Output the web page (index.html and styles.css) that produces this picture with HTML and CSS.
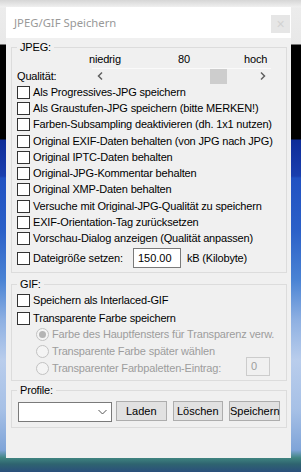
FILE: index.html
```html
<!doctype html>
<html lang="de">
  <head>
    <meta charset="UTF-8" />
    <meta name="viewport" content="width=device-width, initial-scale=1.0" />
    <title>JPEG/GIF Speichern</title>
    <link rel="stylesheet" href="styles.css">
  </head>
  <body>
    <div class="window">
      <div class="titlebar">
        <span class="title">JPEG/GIF Speichern</span>
        <span class="close">&times;</span>
      </div>

      <fieldset class="group group-jpeg">
        <legend>JPEG:</legend>
        <div class="scale-labels">
          <span class="scale-low">niedrig</span>
          <span class="scale-mid">80</span>
          <span>hoch</span>
        </div>
        <div class="quality-row">
          <span>Qualität:</span>
          <div class="scrollbar">
            <span class="sb-btn">
              <svg width="17" height="16" viewBox="0 0 17 16"><polyline points="10,4.5 6.5,8 10,11.5" fill="none" stroke="#606060" stroke-width="1.5" /></svg>
            </span>
            <span class="sb-track"><span class="sb-thumb"></span></span>
            <span class="sb-btn">
              <svg width="17" height="16" viewBox="0 0 17 16"><polyline points="7,4.5 10.5,8 7,11.5" fill="none" stroke="#606060" stroke-width="1.5" /></svg>
            </span>
          </div>
        </div>
        <div class="check"><span class="box"></span>Als Progressives-JPG speichern</div>
        <div class="check"><span class="box"></span>Als Graustufen-JPG speichern (bitte MERKEN!)</div>
        <div class="check"><span class="box"></span>Farben-Subsampling deaktivieren (dh. 1x1 nutzen)</div>
        <div class="check"><span class="box"></span>Original EXIF-Daten behalten (von JPG nach JPG)</div>
        <div class="check"><span class="box"></span>Original IPTC-Daten behalten</div>
        <div class="check"><span class="box"></span>Original-JPG-Kommentar behalten</div>
        <div class="check"><span class="box"></span>Original XMP-Daten behalten</div>
        <div class="check"><span class="box"></span>Versuche mit Original-JPG-Qualität zu speichern</div>
        <div class="check"><span class="box"></span>EXIF-Orientation-Tag zurücksetzen</div>
        <div class="check"><span class="box"></span>Vorschau-Dialog anzeigen (Qualität anpassen)</div>
        <div class="check size-row">
          <span class="box"></span>
          <span>Dateigröße setzen:</span>
          <span class="textbox">150.00</span>
          <span>kB (Kilobyte)</span>
        </div>
      </fieldset>

      <fieldset class="group group-gif">
        <legend>GIF:</legend>
        <div class="check gif-row1"><span class="box"></span>Speichern als Interlaced-GIF</div>
        <div class="check gif-row2"><span class="box"></span>Transparente Farbe speichern</div>
        <div class="radio radio1"><span class="dot checked"></span>Farbe des Hauptfensters für Transparenz verw.</div>
        <div class="radio radio2"><span class="dot"></span>Transparente Farbe später wählen</div>
        <div class="radio radio3">
          <span class="dot"></span>
          <span>Transparenter Farbpaletten-Eintrag:</span>
          <span class="numbox">0</span>
        </div>
      </fieldset>

      <fieldset class="group group-profile">
        <legend>Profile:</legend>
        <div class="profile-row">
          <span class="combo">
            <svg width="9" height="6" viewBox="0 0 9 6"><polyline points="0.5,1 4.5,5 8.5,1" fill="none" stroke="#555" stroke-width="1" /></svg>
          </span>
          <span class="btn">Laden</span>
          <span class="btn">Löschen</span>
          <span class="btn">Speichern</span>
        </div>
      </fieldset>
    </div>
  </body>
</html>
```

FILE: styles.css
```css
* {
  margin: 0;
  padding: 0;
  box-sizing: border-box;
}

body {
  width: 301px;
  height: 472px;
  overflow: hidden;
  font-family: 'Liberation Sans', Arial, sans-serif;
  font-size: 11px;
  line-height: 13px;
  letter-spacing: -0.17px;
  color: #000;
  background: linear-gradient(to bottom,
    #d6d6d6 0px, #efefef 7px,
    #ececec 8px, #e8e8e8 44px,
    #000 45px, #000 139px,
    #0e2c98 140px, #1a3fae 176px,
    #2152c2 178px, #2b60c8 230px,
    #4a83d4 280px, #8eb0e2 320px,
    #b9cdec 360px, #a6c0e6 410px,
    #7fa4d8 450px, #3f8480 458px,
    #2f6470 464px, #2a4f7c 472px);
}

.window {
  width: 285px;
  height: 451px;
  margin: 7px 10px 0 6px;
  background: #f0f0f0;
  overflow: hidden;
}

.titlebar {
  height: 31px;
  background: #fff;
  display: flex;
  align-items: center;
  justify-content: space-between;
  padding-left: 8px;
}

.title {
  font-family: 'Noto Sans', 'Open Sans', sans-serif;
  font-size: 11.3px;
  letter-spacing: 0;
  color: #999;
}

.close {
  align-self: flex-start;
  width: 19px;
  height: 18px;
  margin-top: 8px;
  margin-right: 1px;
  background: #e6e6e6;
  color: #d2d2d2;
  font-size: 14px;
  line-height: 18px;
  text-align: center;
}

.group {
  border: 1px solid #dcdcdc;
  margin: 0 4px 0 5px;
  padding: 0 0 0 5px;
  min-width: 0;
}

.group legend {
  padding: 0 3px;
  line-height: 13px;
}

.group-jpeg {
  margin-top: 3px;
  padding-bottom: 2.6px;
}

.group-gif {
  margin-top: 5px;
  padding-bottom: 2.4px;
}

.group-profile {
  margin-top: 3px;
  padding-bottom: 5px;
}

.scale-labels {
  display: flex;
  height: 13px;
  margin-top: -1px;
}

.scale-low {
  margin-left: 72px;
  width: 89px;
}

.scale-mid {
  width: 66px;
}

.quality-row {
  display: grid;
  grid-template-columns: 75px 179px;
  align-items: center;
  height: 16px;
  margin-top: 2px;
}

.scrollbar {
  display: flex;
  height: 16px;
  border-top: 1px solid #fafafa;
}

.sb-btn {
  display: flex;
  width: 17px;
  margin-top: -1px;
}

.sb-track {
  flex: 1;
  display: flex;
}

.sb-thumb {
  width: 17px;
  height: 15px;
  margin-left: 101px;
  background: #cdcdcd;
}

.check {
  display: flex;
  align-items: center;
  height: 16.3px;
  white-space: nowrap;
}

.group-jpeg .check:first-of-type {
  margin-top: 2.35px;
}

.box {
  flex: none;
  width: 13px;
  height: 13px;
  border: 1px solid #333;
  background: #fff;
  margin-right: 3px;
}

.size-row {
  height: 21px;
  margin-top: 1px;
}

.textbox {
  width: 48px;
  height: 20px;
  margin: 0 6px 0 10px;
  padding: 3px 4px;
  background: #fff;
  border: 1px solid #7a7a7a;
  letter-spacing: 0;
}

.gif-row1 {
  height: 18.4px;
  margin-top: 1px;
}

.gif-row2 {
  height: 16.4px;
}

.radio {
  display: flex;
  align-items: center;
  color: #9d9d9d;
  white-space: nowrap;
  padding-left: 19px;
}

.radio1 {
  height: 16.6px;
}

.radio2 {
  height: 17.6px;
}

.radio3 {
  height: 16.6px;
}

.dot {
  flex: none;
  width: 13px;
  height: 13px;
  border: 1px solid #c2c2c2;
  border-radius: 50%;
  background: #f4f4f4;
  margin-right: 3px;
  display: flex;
  align-items: center;
  justify-content: center;
}

.dot.checked::after {
  content: '';
  width: 7px;
  height: 7px;
  border-radius: 50%;
  background: #b4b4b4;
}

.numbox {
  width: 24px;
  height: 19px;
  margin: -5.6px 0 0 auto;
  margin-right: 16px;
  padding: 2px 4px;
  border: 1px solid #cccccc;
  background: #f0f0f0;
  color: #9d9d9d;
}

.profile-row {
  display: flex;
  align-items: flex-start;
  height: 21px;
  margin-top: 4px;
}

.combo {
  width: 95px;
  height: 20px;
  margin: 1px 4px 0 1px;
  background: #fff;
  border: 1px solid #7a7a7a;
  display: flex;
  align-items: center;
  justify-content: flex-end;
  padding-right: 4px;
}

.btn {
  width: 51px;
  height: 20px;
  margin-right: 6px;
  background: #e1e1e1;
  border: 1px solid #adadad;
  text-align: center;
  line-height: 18px;
  letter-spacing: 0;
}
```
